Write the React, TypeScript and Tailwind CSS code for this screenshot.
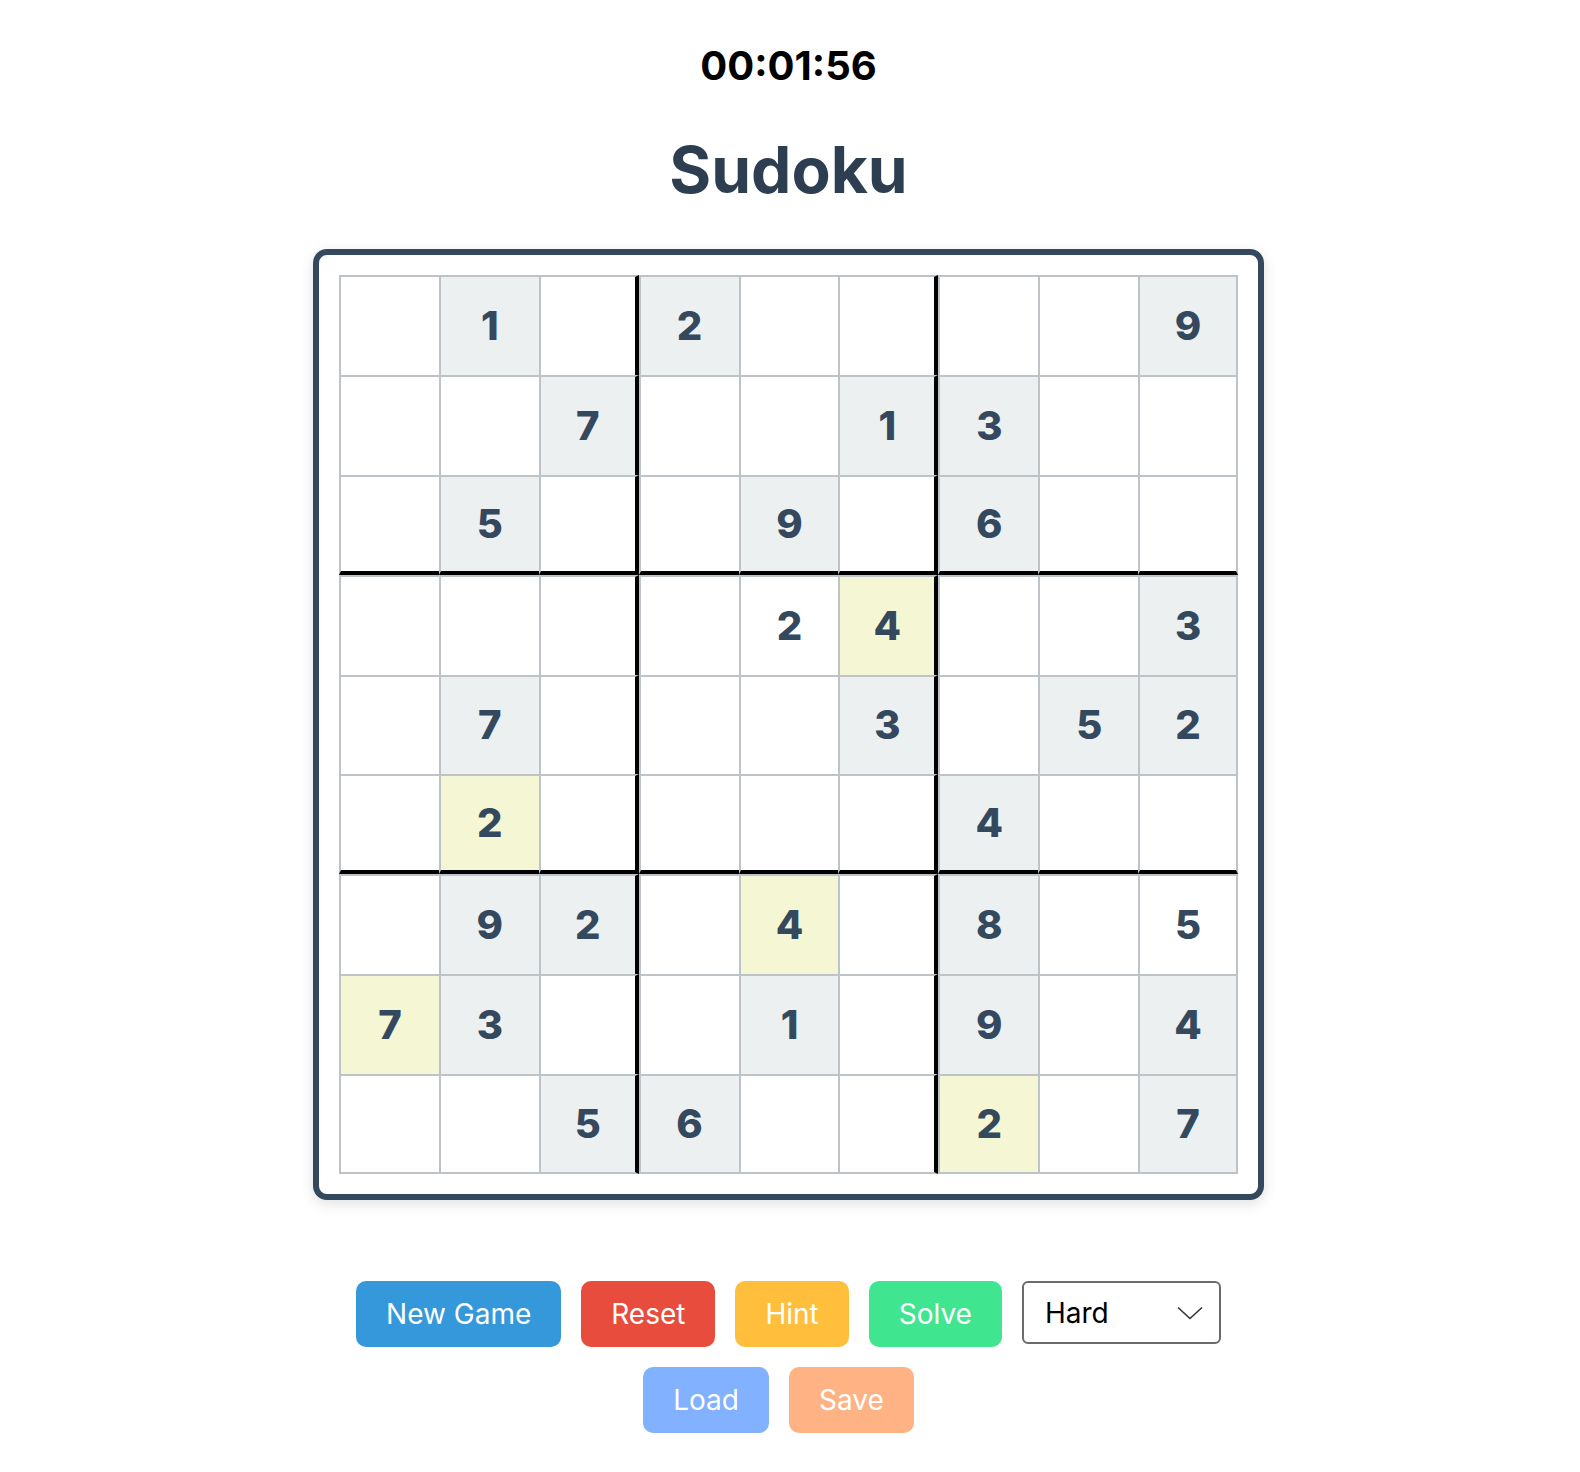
import { useState } from "react"

type Kind = "given" | "hint" | "user" | "empty"

interface Cell {
  value: number | null
  kind: Kind
}

// g = given, y = hint (yellow), u = entered by player, . = empty
const PUZZLE = [
  [".", "g1", ".", "g2", ".", ".", ".", ".", "g9"],
  [".", ".", "g7", ".", ".", "g1", "g3", ".", "."],
  [".", "g5", ".", ".", "g9", ".", "g6", ".", "."],
  [".", ".", ".", ".", "u2", "y4", ".", ".", "g3"],
  [".", "g7", ".", ".", ".", "g3", ".", "g5", "g2"],
  [".", "y2", ".", ".", ".", ".", "g4", ".", "."],
  [".", "g9", "g2", ".", "y4", ".", "g8", ".", "u5"],
  ["y7", "g3", ".", ".", "g1", ".", "g9", ".", "g4"],
  [".", ".", "g5", "g6", ".", ".", "y2", ".", "g7"],
]

const kindOf: Record<string, Kind> = { g: "given", y: "hint", u: "user" }

function parse(token: string): Cell {
  if (token === ".") return { value: null, kind: "empty" }
  return { value: Number(token.slice(1)), kind: kindOf[token[0]] }
}

const cellBg: Record<Kind, string> = {
  given: "bg-[#ecf0f1]",
  hint: "bg-[#f5f6d4]",
  user: "bg-white",
  empty: "bg-white",
}

function SudokuCell({ cell, row, col }: { cell: Cell; row: number; col: number }) {
  // box edges: 4px black on the right / bottom of columns and rows 2 and 5
  const right = col === 2 || col === 5 ? "border-r-4 border-r-black" : col === 8 ? "border-r-2" : ""
  const bottom = row === 2 || row === 5 ? "border-b-4 border-b-black" : row === 8 ? "border-b-2" : ""
  return (
    <div
      className={`flex items-center justify-center border-t-2 border-l-2 border-[#bdc3c7] text-[40px] font-extrabold leading-none text-[#34495e] ${cellBg[cell.kind]} ${right} ${bottom}`}
    >
      {cell.value ?? ""}
    </div>
  )
}

function Chevron() {
  return (
    <svg
      width="26"
      height="14"
      viewBox="0 0 26 14"
      fill="none"
      stroke="#333"
      strokeWidth="1.6"
      className="pointer-events-none absolute right-[18px] top-1/2 -translate-y-1/2"
      aria-hidden
    >
      <path d="M1 1.5 13 12.5 25 1.5" />
    </svg>
  )
}

export default function App() {
  const [difficulty, setDifficulty] = useState("hard")
  const board = PUZZLE.map((r) => r.map(parse))

  const btn = "rounded-[10px] px-[30px] py-4 text-[28px] leading-[34px] text-white"

  return (
    <div className="flex min-h-[1472px] flex-col items-center bg-white pr-[3px] font-['Inter',sans-serif]">
      <div className="mt-[42px] text-[40px] font-bold leading-[48px] text-black">00:01:56</div>

      <h1 className="mt-[41px] text-[64px] font-bold leading-[77px] text-[#2c3e50]">Sudoku</h1>

      <div className="mt-[41px] rounded-[14px] border-[6px] border-[#34495e] bg-white p-5 shadow-[0_4px_14px_rgba(0,0,0,0.12)]">
        <div className="grid h-[899px] w-[899px] grid-cols-9 grid-rows-9">
          {board.map((r, ri) =>
            r.map((cell, ci) => <SudokuCell key={`${ri}-${ci}`} cell={cell} row={ri} col={ci} />)
          )}
        </div>
      </div>

      <div className="mt-[81px] flex w-[951px] flex-wrap items-start justify-center gap-5">
        <button className={`${btn} bg-[#3498db]`}>New Game</button>
        <button className={`${btn} bg-[#e74c3c]`}>Reset</button>
        <button className={`${btn} bg-[#ffbf3c]`}>Hint</button>
        <button className={`${btn} bg-[#3fe68f]`}>Solve</button>
        <div className="relative">
          <select
            value={difficulty}
            onChange={(e) => setDifficulty(e.target.value)}
            className="h-[63px] w-[199px] appearance-none rounded-md border-2 border-[#6b6b6b] bg-white pl-[21px] text-[28px] text-black"
          >
            <option value="easy">Easy</option>
            <option value="medium">Medium</option>
            <option value="hard">Hard</option>
          </select>
          <Chevron />
        </div>
        <button className={`${btn} bg-[#82b1ff]`}>Load</button>
        <button className={`${btn} bg-[#ffb283]`}>Save</button>
        <span className="w-0" aria-hidden />
      </div>
    </div>
  )
}
